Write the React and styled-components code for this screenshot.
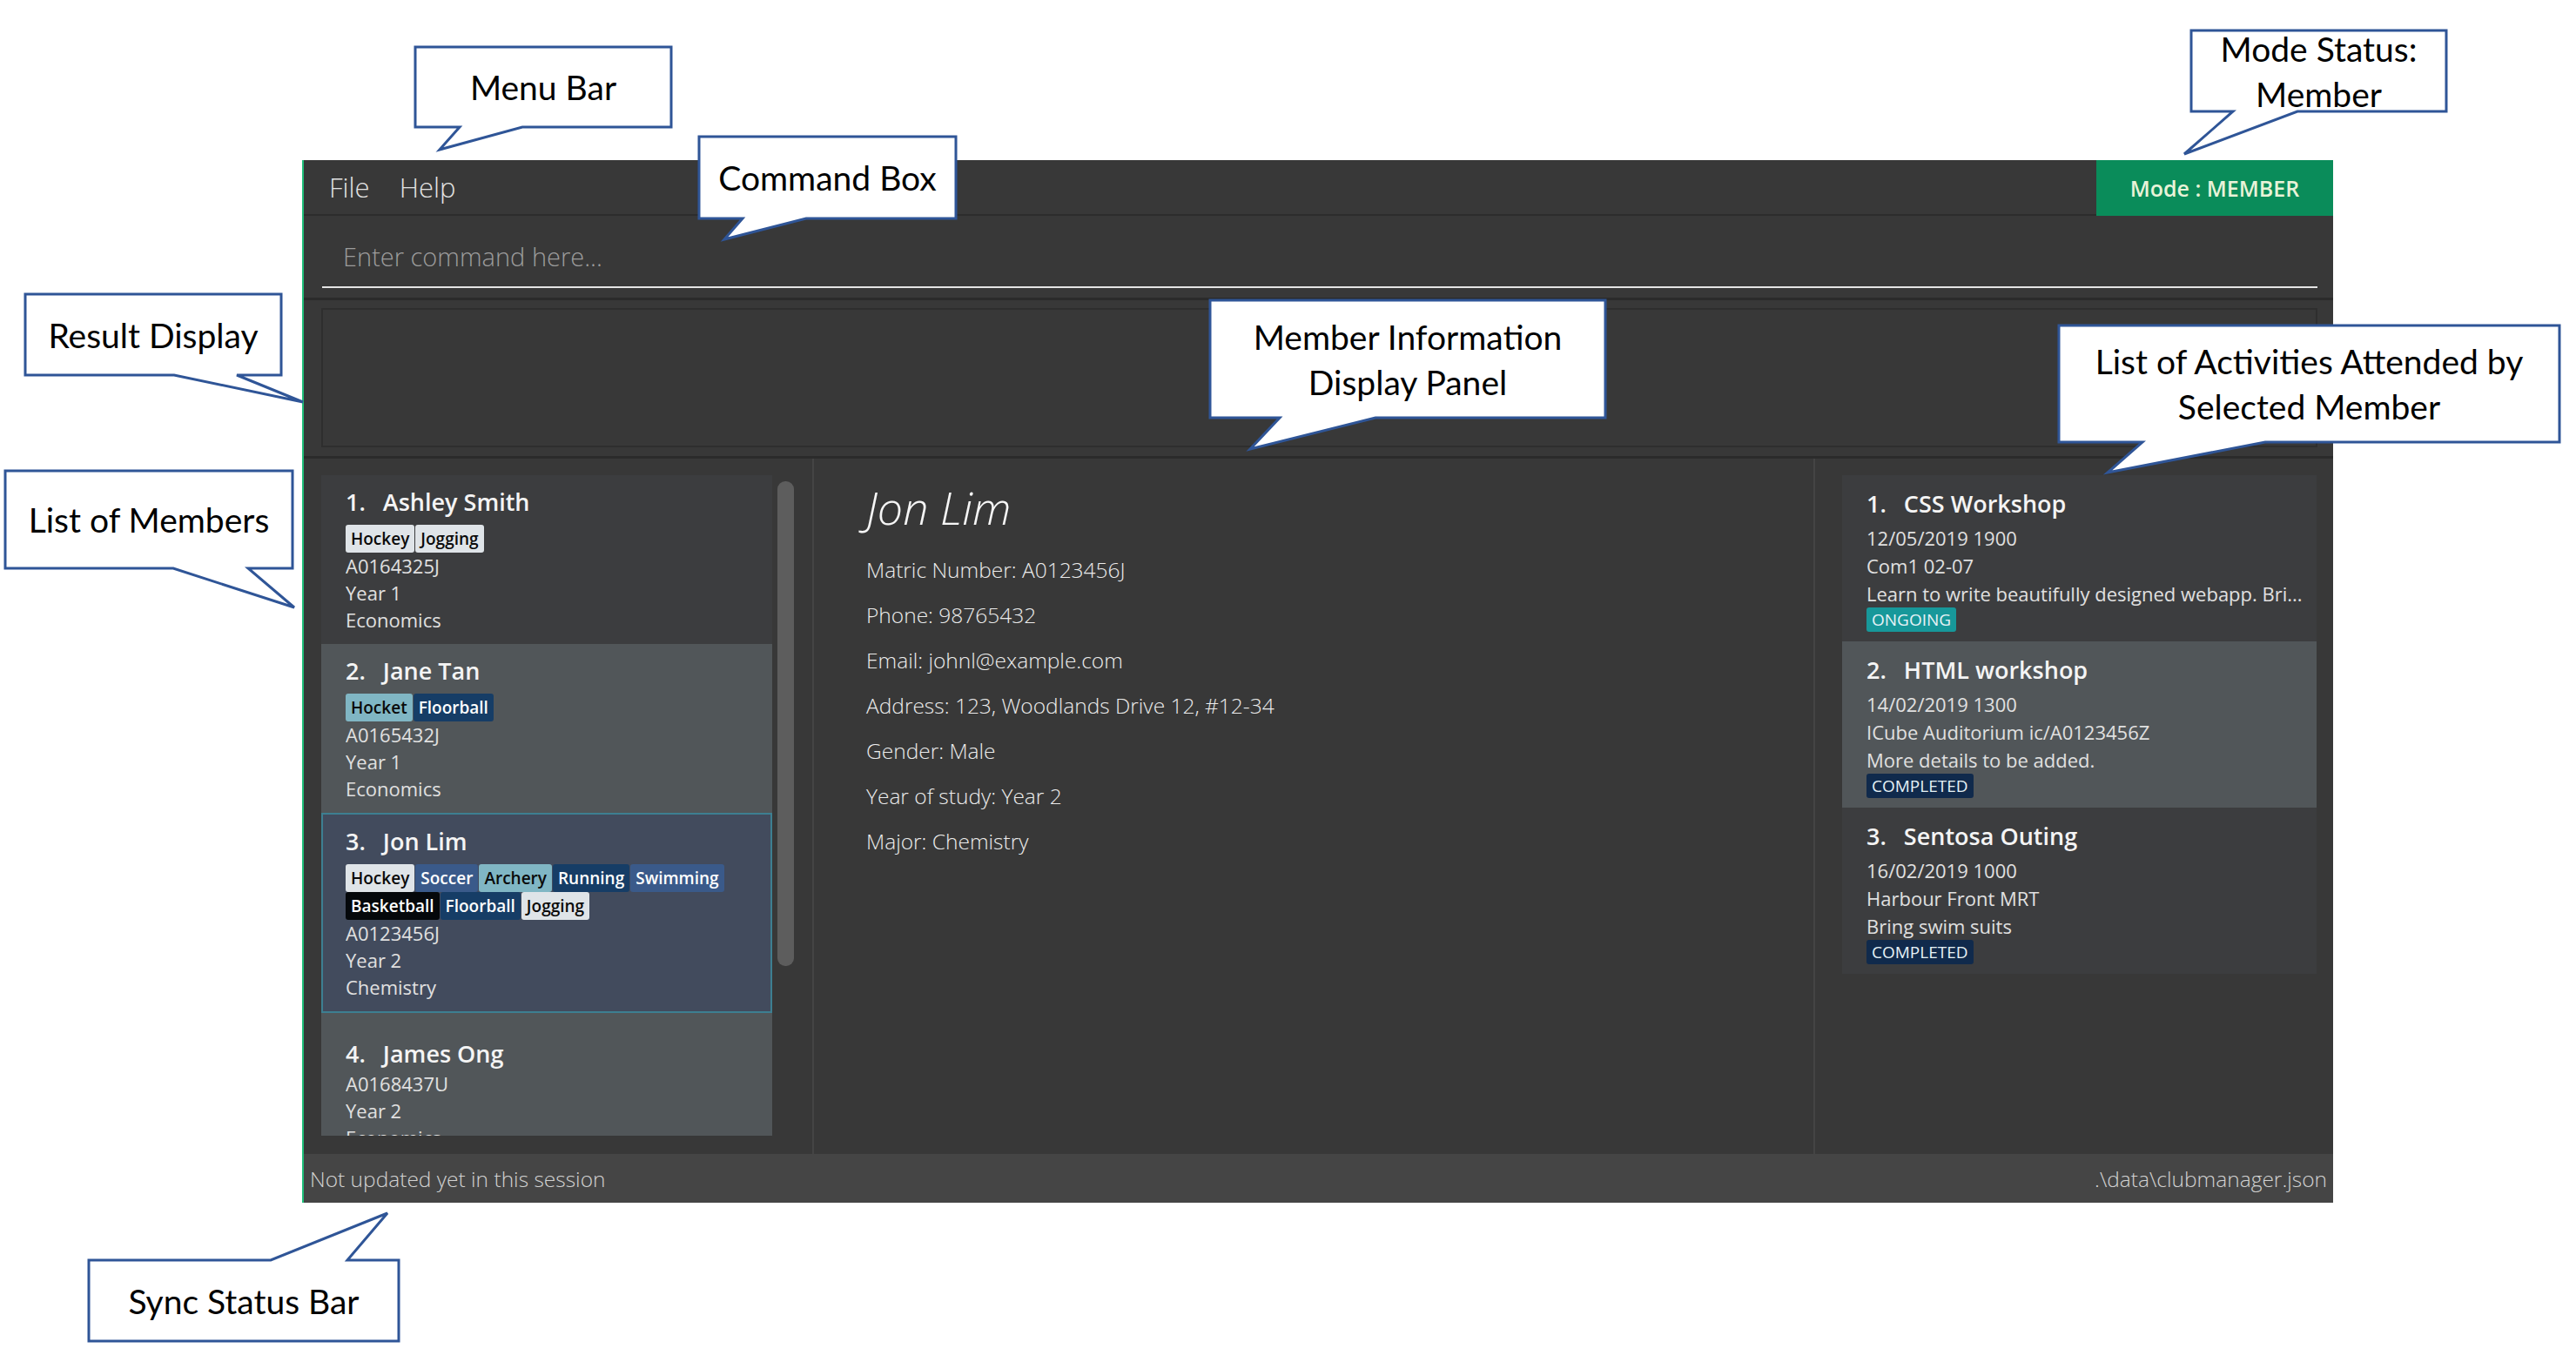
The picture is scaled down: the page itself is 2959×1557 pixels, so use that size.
import React from 'react';
import styled, { createGlobalStyle } from 'styled-components';

const GlobalStyle = createGlobalStyle`
    html, body {
        margin: 0;
        padding: 0;
        background: #ffffff;
    }
`;

const APP_FONT = `"Open Sans", "Noto Sans", sans-serif`;

const Page = styled.div`
    position: relative;
    width: 2959px;
    height: 1557px;
    padding: 184px 0 0 347px;
    box-sizing: border-box;
    overflow: hidden;
    background: #ffffff;
`;

const Window = styled.div`
    width: 2333px;
    height: 1198px;
    box-sizing: border-box;
    border-left: 2px solid #1fbf7a;
    background: #383838;
    display: flex;
    flex-direction: column;
    font-family: ${APP_FONT};
`;

const MenuBar = styled.div`
    height: 64px;
    box-sizing: border-box;
    border-bottom: 2px solid #2c2c2c;
    display: flex;
    align-items: stretch;
    justify-content: space-between;
`;

const MenuItems = styled.div`
    display: flex;
    align-items: center;
    gap: 34px;
    padding-left: 29px;
`;

const MenuItem = styled.span`
    font-size: 31px;
    font-weight: 300;
    color: #e2e2e2;
`;

const ModeBadge = styled.div`
    width: 272px;
    margin-bottom: -2px;
    background: #0a8c5a;
    color: #e8f3d8;
    font-size: 25px;
    font-weight: 600;
    display: flex;
    align-items: center;
    justify-content: center;
`;

const CommandSection = styled.div`
    height: 97px;
    box-sizing: border-box;
    border-bottom: 3px solid #2b2b2b;
    padding: 0 18px 0 21px;
    display: flex;
    flex-direction: column;
    justify-content: flex-end;
`;

const CommandInput = styled.div`
    height: 72px;
    box-sizing: border-box;
    border-bottom: 2px solid #e4e4e4;
    margin-bottom: 11px;
    padding-left: 24px;
    display: flex;
    align-items: center;
    font-size: 29px;
    font-weight: 300;
    color: #9c9c9c;
`;

const ResultSection = styled.div`
    height: 182px;
    box-sizing: border-box;
    border-bottom: 3px solid #2b2b2b;
    padding: 9px 18px 10px 20px;
`;

const ResultBox = styled.div`
    height: 100%;
    box-sizing: border-box;
    border: 2px solid #2e2e2e;
    background: #383838;
`;

const Main = styled.div`
    flex: 1;
    display: flex;
    min-height: 0;
`;

const ListColumn = styled.div`
    width: 586px;
    box-sizing: border-box;
    border-right: 2px solid #444444;
    padding: 19px 0 21px 20px;
    display: flex;
    gap: 6px;
`;

const ListViewport = styled.div`
    width: 518px;
    overflow: hidden;
    display: flex;
    flex-direction: column;
`;

const ScrollThumb = styled.div`
    width: 19px;
    height: 557px;
    margin-top: 7px;
    border-radius: 9px;
    background: #5d5d5d;
`;

const Card = styled.div`
    flex-shrink: 0;
    box-sizing: border-box;
    background: ${(p) => p.$bg};
    border: ${(p) => (p.$selected ? '2px solid #3d7f91' : 'none')};
    padding: ${(p) => p.$padTop}px 12px 12px ${(p) => (p.$selected ? 26 : 28)}px;
`;

const CardTitle = styled.div`
    font-size: 27px;
    font-weight: 600;
    line-height: 38px;
    color: #f4f4f4;
    white-space: nowrap;
`;

const Index = styled.span`
    margin-right: 20px;
`;

const TagBlock = styled.div`
    margin: 7px 0 0;
    display: flex;
    flex-direction: column;
`;

const TagRow = styled.div`
    display: flex;
    gap: 1px;
`;

const Tag = styled.span`
    height: 32px;
    line-height: 32px;
    padding: 0 6px;
    border-radius: 3px;
    font-size: 19px;
    font-weight: 600;
    background: ${(p) => p.$bg};
    color: ${(p) => p.$fg};
`;

const CardLine = styled.div`
    font-size: 22px;
    line-height: ${(p) => p.$lh || 31}px;
    color: #e0e0e0;
    white-space: nowrap;
    overflow: hidden;
`;

const DetailColumn = styled.div`
    flex: 1;
    box-sizing: border-box;
    border-right: 2px solid #444444;
    padding: 22px 62px 0 60px;
`;

const DetailName = styled.div`
    font-size: 52px;
    font-style: italic;
    font-weight: 300;
    line-height: 68px;
    color: #f6f6f6;
    margin-bottom: 12px;
`;

const DetailLine = styled.div`
    font-size: 24.5px;
    font-weight: 300;
    line-height: 52px;
    color: #ececec;
`;

const ActivityColumn = styled.div`
    width: 595px;
    box-sizing: border-box;
    padding: 19px 19px 0 31px;
    display: flex;
    flex-direction: column;
`;

const ActivityCard = styled.div`
    background: ${(p) => p.$bg};
    padding: 14px 12px 11px 28px;
`;

const ActivityLines = styled.div`
    margin-top: 4px;
`;

const StatusTag = styled.span`
    display: inline-block;
    height: 28px;
    line-height: 28px;
    padding: 0 6px;
    border-radius: 3px;
    font-size: 19px;
    background: ${(p) => (p.$ongoing ? '#17989a' : '#102a4c')};
    color: #e6f2f6;
`;

const StatusBar = styled.div`
    height: 56px;
    background: #454545;
    padding: 0 7px;
    display: flex;
    align-items: center;
    justify-content: space-between;
    font-size: 24.5px;
    font-weight: 300;
    color: #d2d2d2;
`;

/* annotation callouts drawn over the screenshot */
const CalloutBox = styled.div`
    position: absolute;
    box-sizing: border-box;
    display: flex;
    flex-direction: column;
    align-items: center;
    justify-content: center;
    font-family: "Lato", "Liberation Sans", sans-serif;
    font-size: 39px;
    line-height: 52px;
    color: #000000;
    text-align: center;
    z-index: 2;
`;

const CalloutShape = styled.svg`
    position: absolute;
    left: 0;
    top: 0;
    overflow: visible;
    z-index: -1;
`;

const CalloutLabel = styled.span`
    position: relative;
    white-space: nowrap;
`;

const T = {
    light: ['#dfe4e8', '#0a0a0a'],
    teal: ['#80b6c4', '#0a0a0a'],
    blue: ['#3a5a8a', '#ffffff'],
    navy: ['#163d66', '#ffffff'],
    black: ['#05080b', '#ffffff'],
};

const members = [
    { name: 'Ashley Smith', bg: '#3c3d3f', pad: 12, tags: [[['Hockey', 'light'], ['Jogging', 'light']]], lines: ['A0164325J', 'Year 1', 'Economics'] },
    { name: 'Jane Tan', bg: '#515659', pad: 12, tags: [[['Hocket', 'teal'], ['Floorball', 'navy']]], lines: ['A0165432J', 'Year 1', 'Economics'] },
    {
        name: 'Jon Lim', bg: '#424b5d', pad: 12, selected: true,
        tags: [
            [['Hockey', 'light'], ['Soccer', 'blue'], ['Archery', 'teal'], ['Running', 'navy'], ['Swimming', 'blue']],
            [['Basketball', 'black'], ['Floorball', 'navy'], ['Jogging', 'light']],
        ],
        lines: ['A0123456J', 'Year 2', 'Chemistry'],
    },
    { name: 'James Ong', bg: '#515659', pad: 28, tags: [], lines: ['A0168437U', 'Year 2', 'Economics'] },
];

const details = [
    'Matric Number: A0123456J',
    'Phone: 98765432',
    'Email: johnl@example.com',
    'Address: 123, Woodlands Drive 12, #12-34',
    'Gender: Male',
    'Year of study: Year 2',
    'Major: Chemistry',
];

const activities = [
    { name: 'CSS Workshop', bg: '#3c3d3f', lines: ['12/05/2019 1900', 'Com1 02-07', 'Learn to write beautifully designed webapp. Bri...'], status: 'ONGOING' },
    { name: 'HTML workshop', bg: '#515659', lines: ['14/02/2019 1300', 'ICube Auditorium ic/A0123456Z', 'More details to be added.'], status: 'COMPLETED' },
    { name: 'Sentosa Outing', bg: '#3c3d3f', lines: ['16/02/2019 1000', 'Harbour Front MRT', 'Bring swim suits'], status: 'COMPLETED' },
];

const callouts = [
    { label: ['Menu Bar'], x: 477, y: 54, w: 294, h: 92, side: 'bottom', a: 528, b: 600, tip: [505, 172] },
    { label: ['Command Box'], x: 803, y: 157, w: 295, h: 94, side: 'bottom', a: 853, b: 926, tip: [832, 275] },
    { label: ['Result Display'], x: 29, y: 338, w: 294, h: 93, side: 'bottom', a: 200, b: 272, tip: [348, 462] },
    { label: ['List of Members'], x: 6, y: 541, w: 330, h: 112, side: 'bottom', a: 199, b: 285, tip: [338, 698] },
    { label: ['Mode Status:', 'Member'], x: 2517, y: 35, w: 293, h: 93, side: 'bottom', a: 2565, b: 2639, tip: [2509, 177] },
    { label: ['Member Information', 'Display Panel'], x: 1390, y: 345, w: 454, h: 135, side: 'bottom', a: 1470, b: 1580, tip: [1436, 516] },
    { label: ['List of Activities Attended by', 'Selected Member'], x: 2365, y: 374, w: 575, h: 134, side: 'bottom', a: 2461, b: 2602, tip: [2421, 543] },
    { label: ['Sync Status Bar'], x: 102, y: 1448, w: 356, h: 93, side: 'top', a: 311, b: 399, tip: [445, 1394] },
];

const calloutPath = (c) => {
    const a = c.a - c.x;
    const b = c.b - c.x;
    const tx = c.tip[0] - c.x;
    const ty = c.tip[1] - c.y;
    if (c.side === 'top') {
        return `M0,0 H${a} L${tx},${ty} L${b},0 H${c.w} V${c.h} H0 Z`;
    }
    return `M0,0 H${c.w} V${c.h} H${b} L${tx},${ty} L${a},${c.h} H0 Z`;
};

const Callout = ({ c }) => (
    <CalloutBox style={{ left: c.x, top: c.y, width: c.w, height: c.h }}>
        <CalloutShape width={c.w} height={c.h}>
            <path d={calloutPath(c)} fill="#ffffff" stroke="#2f5597" strokeWidth="3" strokeLinejoin="miter" />
        </CalloutShape>
        {c.label.map((l) => (
            <CalloutLabel key={l}>{l}</CalloutLabel>
        ))}
    </CalloutBox>
);

const MemberCard = ({ m, i }) => (
    <Card $bg={m.bg} $selected={m.selected} $padTop={m.pad}>
        <CardTitle>
            <Index>{i + 1}.</Index>
            {m.name}
        </CardTitle>
        {m.tags.length > 0 && (
            <TagBlock>
                {m.tags.map((row, r) => (
                    <TagRow key={r}>
                        {row.map(([t, kind]) => (
                            <Tag key={t} $bg={T[kind][0]} $fg={T[kind][1]}>{t}</Tag>
                        ))}
                    </TagRow>
                ))}
            </TagBlock>
        )}
        {m.lines.map((l) => (
            <CardLine key={l}>{l}</CardLine>
        ))}
    </Card>
);

const App = () => {
    return (
        <Page>
            <GlobalStyle />
            <Window>
                <MenuBar>
                    <MenuItems>
                        <MenuItem>File</MenuItem>
                        <MenuItem>Help</MenuItem>
                    </MenuItems>
                    <ModeBadge>Mode : MEMBER</ModeBadge>
                </MenuBar>

                <CommandSection>
                    <CommandInput>Enter command here...</CommandInput>
                </CommandSection>

                <ResultSection>
                    <ResultBox />
                </ResultSection>

                <Main>
                    <ListColumn>
                        <ListViewport>
                            {members.map((m, i) => (
                                <MemberCard key={m.name} m={m} i={i} />
                            ))}
                        </ListViewport>
                        <ScrollThumb />
                    </ListColumn>

                    <DetailColumn>
                        <DetailName>Jon Lim</DetailName>
                        {details.map((d) => (
                            <DetailLine key={d}>{d}</DetailLine>
                        ))}
                    </DetailColumn>

                    <ActivityColumn>
                        {activities.map((a, i) => (
                            <ActivityCard key={a.name} $bg={a.bg}>
                                <CardTitle>
                                    <Index>{i + 1}.</Index>
                                    {a.name}
                                </CardTitle>
                                <ActivityLines>
                                    {a.lines.map((l) => (
                                        <CardLine key={l} $lh={32}>{l}</CardLine>
                                    ))}
                                </ActivityLines>
                                <StatusTag $ongoing={a.status === 'ONGOING'}>{a.status}</StatusTag>
                            </ActivityCard>
                        ))}
                    </ActivityColumn>
                </Main>

                <StatusBar>
                    <span>Not updated yet in this session</span>
                    <span>.\data\clubmanager.json</span>
                </StatusBar>
            </Window>

            {callouts.map((c) => (
                <Callout key={c.label[0]} c={c} />
            ))}
        </Page>
    );
};

export default App;
